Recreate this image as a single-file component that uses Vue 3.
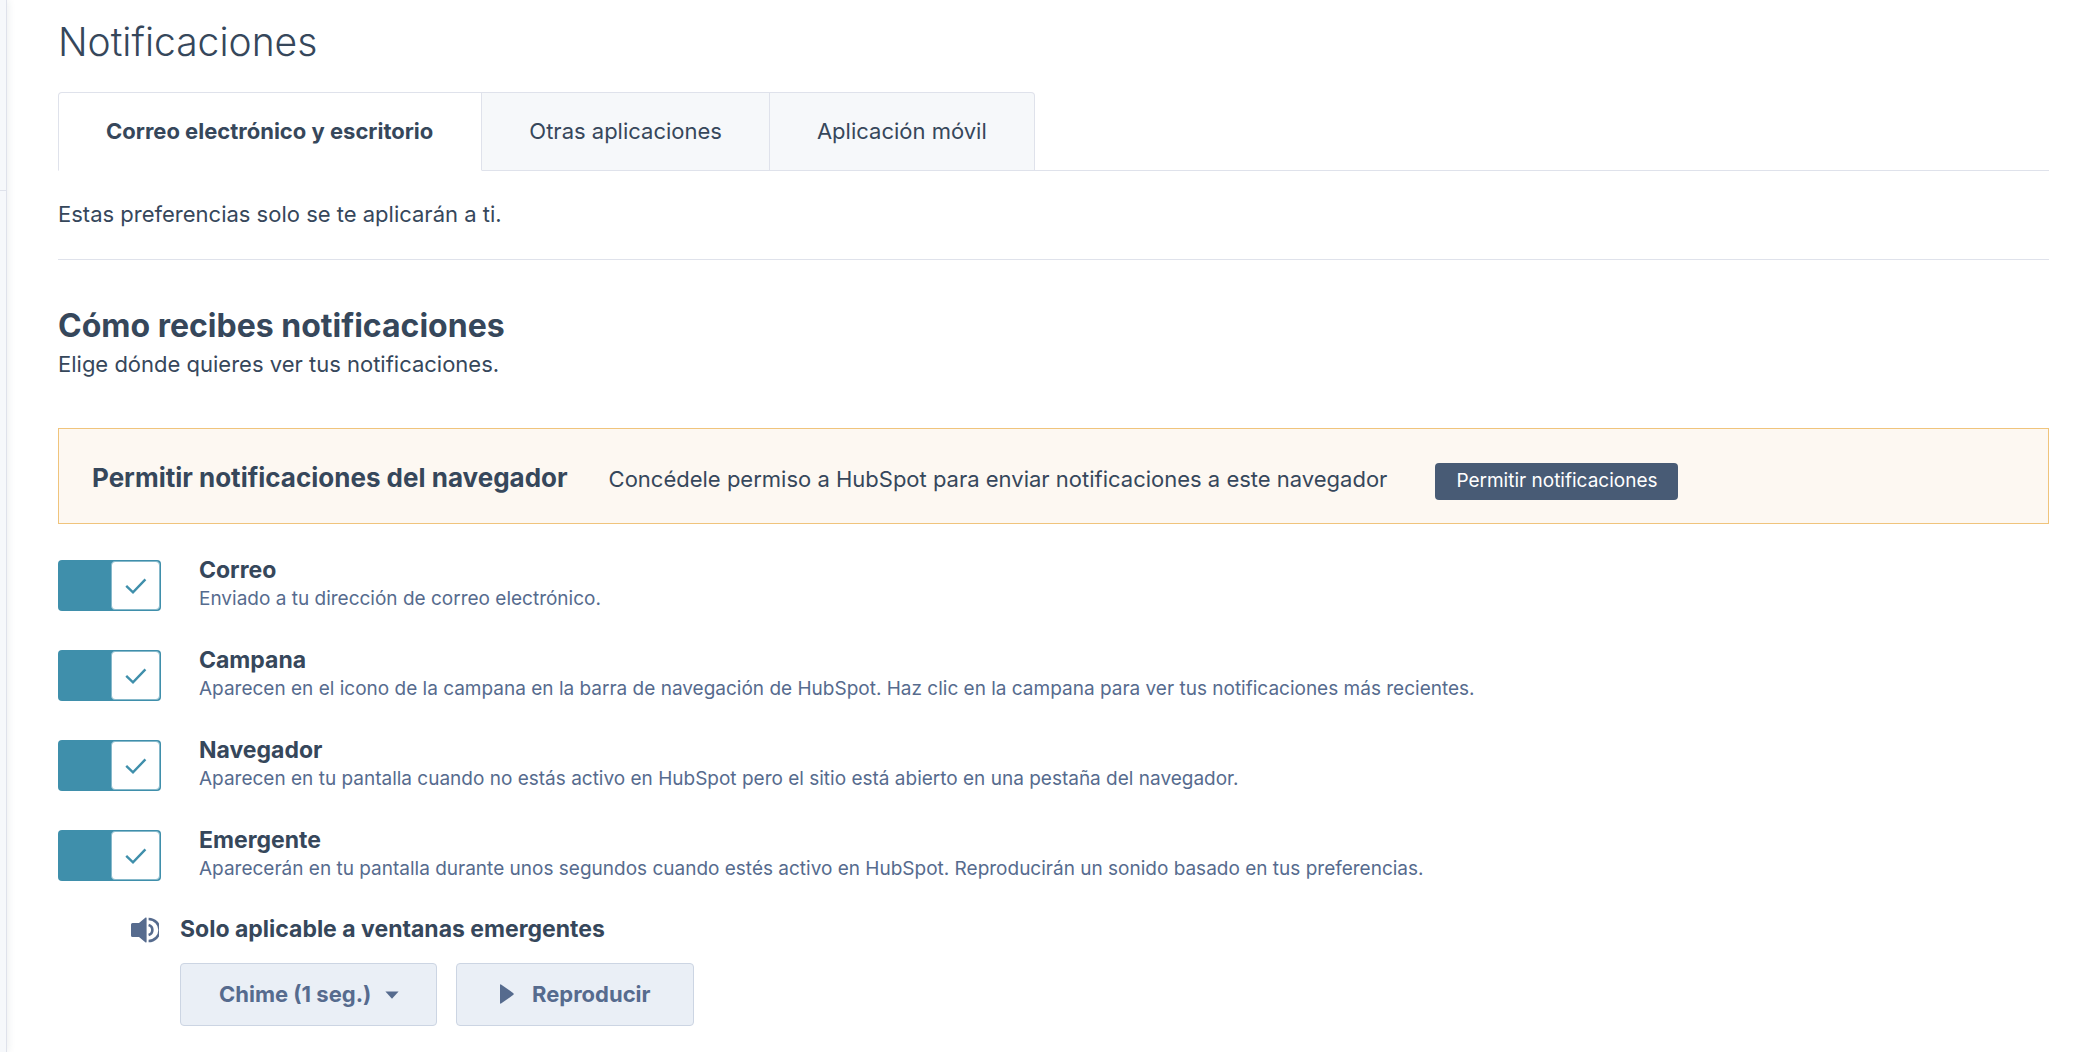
<script setup>
import { ref } from 'vue'

const tabs = ['Correo electrónico y escritorio', 'Otras aplicaciones', 'Aplicación móvil']
const activeTab = ref(0)

const channels = ref([
  { id: 'correo', name: 'Correo', on: true, text: 'Enviado a tu dirección de correo electrónico.' },
  { id: 'campana', name: 'Campana', on: true, text: 'Aparecen en el icono de la campana en la barra de navegación de HubSpot. Haz clic en la campana para ver tus notificaciones más recientes.' },
  { id: 'navegador', name: 'Navegador', on: true, text: 'Aparecen en tu pantalla cuando no estás activo en HubSpot pero el sitio está abierto en una pestaña del navegador.' },
  { id: 'emergente', name: 'Emergente', on: true, text: 'Aparecerán en tu pantalla durante unos segundos cuando estés activo en HubSpot. Reproducirán un sonido basado en tus preferencias.' },
])
</script>

<template>
  <div class="page">
    <aside class="rail"><div class="rail-section"></div></aside>
    <main class="content">
      <h1>Notificaciones</h1>

      <div class="tabs" role="tablist">
        <button
          v-for="(tab, i) in tabs"
          :key="tab"
          type="button"
          role="tab"
          class="tab"
          :class="{ active: i === activeTab }"
          :aria-selected="i === activeTab"
          @click="activeTab = i"
        >{{ tab }}</button>
        <div class="tabs-rest"></div>
      </div>

      <p class="scope">Estas preferencias solo se te aplicarán a ti.</p>

      <h2>Cómo recibes notificaciones</h2>
      <p class="lead">Elige dónde quieres ver tus notificaciones.</p>

      <section class="banner">
        <h3>Permitir notificaciones del navegador</h3>
        <p>Concédele permiso a HubSpot para enviar notificaciones a este navegador</p>
        <button type="button" class="allow">Permitir notificaciones</button>
      </section>

      <ul class="channels">
        <li v-for="c in channels" :key="c.id" class="channel">
          <span class="toggle" :class="{ off: !c.on }">
            <input :id="c.id" v-model="c.on" type="checkbox" role="switch" />
            <span class="knob">
              <svg v-if="c.on" width="22" height="18" viewBox="0 0 22 18" aria-hidden="true">
                <path d="M1.2 8.8 L8 15.4 L20.4 2.4" fill="none" stroke="#3f8fab" stroke-width="2.4" />
              </svg>
            </span>
          </span>
          <div class="channel-text">
            <label class="name" :for="c.id">{{ c.name }}</label>
            <p class="description">{{ c.text }}</p>
          </div>
        </li>
      </ul>

      <section class="sound">
        <svg class="speaker" width="28" height="26" viewBox="0 0 28 26" aria-hidden="true">
          <path d="M1.5 6 H8 L14.6 0.6 Q15.6 0 15.6 1.2 V24.8 Q15.6 26 14.6 25.4 L8 20 H1.5 Q0 20 0 18.5 V7.5 Q0 6 1.5 6 Z" fill="#566b8e" />
          <path d="M17.6 2 A11 11 0 0 1 17.6 24 M17.6 8 A5.2 5.2 0 0 1 17.6 18" fill="none" stroke="#566b8e" stroke-width="2.6" />
        </svg>
        <div>
          <label class="sound-title" for="sound">Solo aplicable a ventanas emergentes</label>
          <div class="sound-actions">
            <span class="picker">
              <select id="sound">
                <option>Chime (1 seg.)</option>
              </select>
              <svg width="14" height="8" viewBox="0 0 14 8" aria-hidden="true"><path d="M0.4 0.4 H13.6 L7 7.8 Z" fill="#566b8e" /></svg>
            </span>
            <button type="button" class="play">
              <svg width="14" height="20" viewBox="0 0 14 20" aria-hidden="true"><path d="M0 1 Q0 0 1 0.4 L13.4 9.2 Q14 10 13.4 10.8 L1 19.6 Q0 20 0 19 Z" fill="#566b8e" /></svg>
              Reproducir
            </button>
          </div>
        </div>
      </section>
    </main>
  </div>
</template>

<style>
body {
  background: #fff;
}
</style>

<style scoped>
.page {
  display: flex;
  min-height: 100vh;
  color: #36475b;
  font-family: Inter, "Liberation Sans", sans-serif;
  font-size: 22px;
  line-height: 32px;
}
h1, h2, h3, p, ul {
  margin: 0;
  padding: 0;
}
button, select {
  font: inherit;
  color: inherit;
  cursor: pointer;
}
.rail {
  flex: none;
  width: 6px;
  background: #f6f8fb;
  border-right: 1px solid #dfe2eb;
  box-shadow: 0 0 8px rgba(45, 62, 80, 0.12);
}
.rail-section {
  height: 190px;
  border-bottom: 1px solid #dfe2eb;
}
.content {
  flex: 1;
  min-width: 0;
  padding: 18px 45px 24px 51px;
}
h1 {
  font-size: 39px;
  font-weight: 300;
  line-height: 48px;
}
.tabs {
  display: flex;
  margin-top: 26px;
}
.tab {
  box-sizing: border-box;
  height: 79px;
  padding: 0 47px 2px;
  background: #f6f8fa;
  border: 1px solid #dfe2eb;
  border-left-width: 0;
}
.tab:first-child {
  border-left-width: 1px;
  border-top-left-radius: 4px;
}
.tab:nth-child(3) {
  border-top-right-radius: 4px;
}
.tab.active {
  padding: 0 48px 2px 47px;
  background: #fff;
  border-bottom-color: #fff;
  font-weight: 700;
}
.tabs-rest {
  flex: 1;
  border-bottom: 1px solid #dfe2eb;
}
.scope {
  padding: 27px 0 29px;
  border-bottom: 1px solid #dfe2eb;
}
h2 {
  margin-top: 46px;
  font-size: 32px;
  font-weight: 700;
  line-height: 40px;
}
.lead {
  margin-top: 2px;
}
.banner {
  display: flex;
  flex-wrap: wrap;
  align-items: baseline;
  gap: 32px;
  box-sizing: border-box;
  min-height: 96px;
  margin-top: 48px;
  padding: 33px 33px 20px;
  background: #fdf8f2;
  border: 1px solid #f0c47c;
}
.banner p {
  padding: 0 16px 0 9px;
}
h3 {
  font-size: 26px;
  font-weight: 700;
}
.allow {
  height: 37px;
  padding: 0 21px;
  border: 0;
  border-radius: 4px;
  background: #485b75;
  color: #fff;
  font-size: 19px;
}
.channels {
  display: flex;
  flex-direction: column;
  gap: 30px;
  margin-top: 36px;
  list-style: none;
}
.channel {
  display: flex;
  gap: 38px;
  min-height: 60px;
}
.toggle {
  position: relative;
  flex: none;
  width: 103px;
  height: 51px;
}
.toggle input {
  display: block;
  width: 100%;
  height: 100%;
  margin: 0;
  appearance: none;
  background: #3f8fab;
  border-radius: 4px;
  cursor: pointer;
}
.knob {
  position: absolute;
  top: 1px;
  right: 1px;
  bottom: 1px;
  box-sizing: border-box;
  display: grid;
  place-items: center;
  width: 49px;
  background: #fff;
  border: 1px solid #86b9cb;
  border-radius: 4px;
  pointer-events: none;
}
.toggle.off input {
  background: #cbd6e2;
}
.toggle.off .knob {
  right: auto;
  left: 1px;
}
.channel-text {
  margin-top: -5px;
}
.name {
  display: block;
  font-size: 23px;
  font-weight: 700;
  line-height: 30px;
}
.description {
  color: #566b8e;
  font-size: 19px;
  line-height: 28px;
}
.sound {
  display: flex;
  gap: 21px;
  margin-top: 23px;
  padding-left: 73px;
}
.speaker {
  flex: none;
  margin-top: 4px;
}
.sound-title {
  font-size: 23px;
  font-weight: 700;
}
.sound-actions {
  display: flex;
  gap: 19px;
  margin-top: 18px;
  color: #566b8e;
  font-weight: 700;
}
.picker {
  position: relative;
}
.picker select,
.play {
  box-sizing: border-box;
  height: 63px;
  padding-bottom: 2px;
  background: #eaeff6;
  border: 1px solid #ccd5e3;
  border-radius: 4px;
}
.picker select {
  padding-left: 38px;
  padding-right: 64px;
  appearance: none;
}
.picker svg {
  position: absolute;
  top: 28px;
  right: 38px;
  pointer-events: none;
}
.play {
  display: flex;
  align-items: center;
  gap: 18px;
  padding-left: 43px;
  padding-right: 42px;
}
</style>
